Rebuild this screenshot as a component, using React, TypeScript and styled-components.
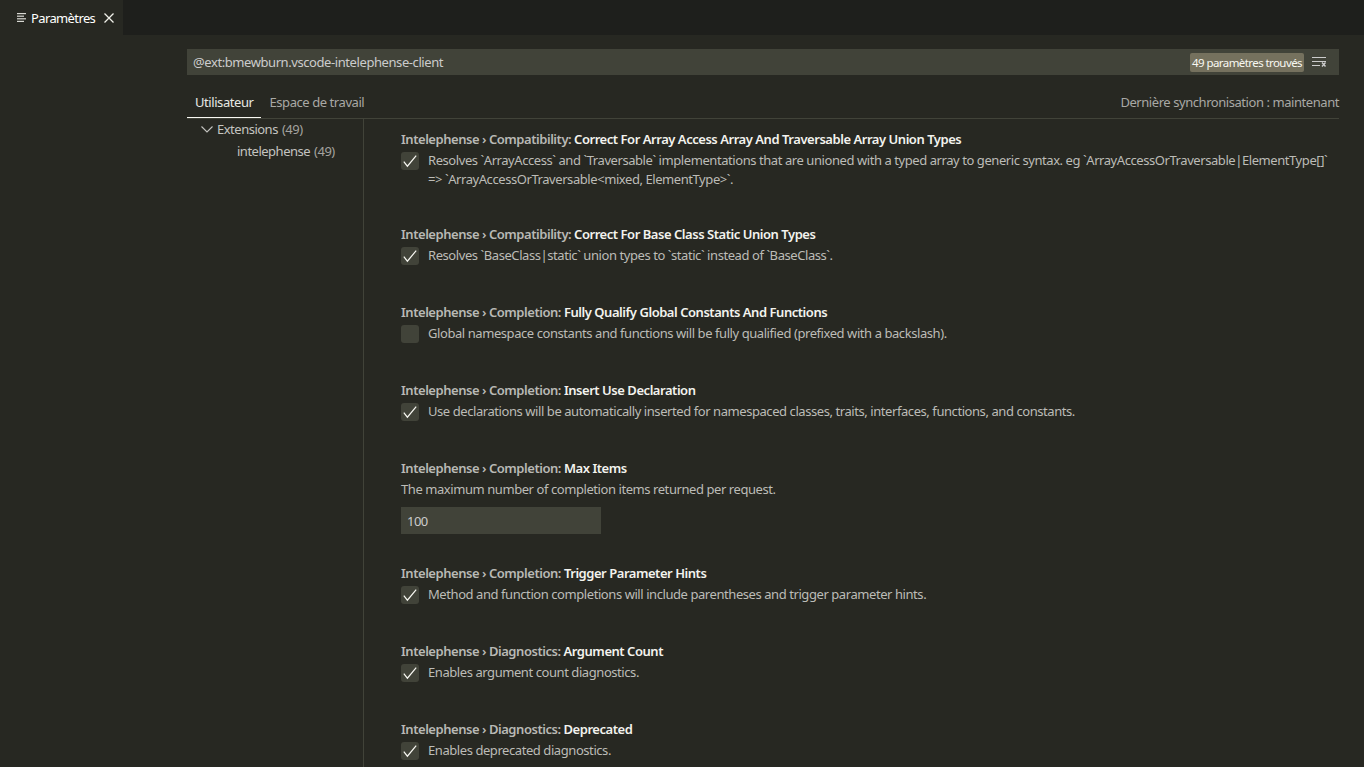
import styled, { createGlobalStyle } from "styled-components";

const GlobalStyle = createGlobalStyle`
  html, body {
    margin: 0;
    height: 100%;
    overflow: hidden;
    background: #272822;
  }
  #root {
    height: 100%;
  }
`;

const Page = styled.div`
  height: 767px;
  display: flex;
  flex-direction: column;
  background: #272822;
  color: #cccccc;
  font-family: "Noto Sans", "Open Sans", sans-serif;
  font-size: 13px;
  overflow: hidden;
`;

const TabBar = styled.div`
  height: 35px;
  flex: none;
  display: flex;
  background: #1e1f1c;
`;

const Tab = styled.div`
  width: 123px;
  display: flex;
  align-items: center;
  padding-left: 17px;
  box-sizing: border-box;
  background: #272822;
  color: #ffffff;
  font-size: 13px;
  letter-spacing: -0.62px;
`;

const TabIcon = styled.svg`
  width: 10px;
  height: 10px;
  fill: #d8d8d3;
`;

const TabLabel = styled.span`
  margin-left: 4px;
`;

const CloseButton = styled.svg`
  width: 12px;
  height: 12px;
  margin-left: 8px;
  stroke: #f0f0ea;
  stroke-width: 1.3;
  fill: none;
`;

const Editor = styled.div`
  flex: 1;
  min-height: 0;
  display: flex;
  flex-direction: column;
  padding: 14px 25px 0 187px;
`;

const SearchBox = styled.div`
  height: 26px;
  flex: none;
  display: flex;
  align-items: center;
  padding: 0 12px 0 6px;
  background: #414339;
  color: #cccccc;
`;

const SearchText = styled.span`
  flex: 1;
  letter-spacing: -0.42px;
`;

const CountBadge = styled.span`
  height: 19px;
  line-height: 19px;
  padding: 0 2px;
  background: #75715e;
  border-radius: 2px;
  color: #f8f8f2;
  font-size: 11.5px;
  letter-spacing: -0.58px;
`;

const ClearIcon = styled.svg`
  width: 16px;
  height: 16px;
  margin-left: 7px;
  stroke: #cccccc;
  fill: none;
`;

const TabsRow = styled.div`
  height: 29px;
  flex: none;
  margin-top: 14px;
  display: flex;
  align-items: flex-start;
  border-bottom: 1px solid #414339;
`;

const ScopeTab = styled.div<{ $active?: boolean }>`
  height: 29px;
  line-height: 26px;
  box-sizing: border-box;
  padding: 0 8px;
  letter-spacing: -0.43px;
  color: ${(p) => (p.$active ? "#e8e8e3" : "#a9a9a5")};
  border-bottom: 1px solid ${(p) => (p.$active ? "#f8f8f2" : "transparent")};
`;

const SyncLabel = styled.div`
  margin-left: auto;
  line-height: 26px;
  color: #a9a9a5;
  letter-spacing: -0.44px;
`;

const Body = styled.div`
  flex: 1;
  min-height: 0;
  display: flex;
`;

const Tree = styled.div`
  width: 176px;
  flex: none;
  border-right: 1px solid #414339;
`;

const TreeRow = styled.div<{ $indent: number }>`
  height: 22px;
  box-sizing: border-box;
  padding-bottom: 2px;
  display: flex;
  align-items: center;
  padding-left: ${(p) => p.$indent}px;
  letter-spacing: -0.5px;
  color: #c4c4c0;
`;

const TreeChevron = styled.svg`
  width: 16px;
  height: 16px;
  margin-right: 2px;
  stroke: #c4c4c0;
  stroke-width: 1.1;
  fill: none;
`;

const TreeCount = styled.span`
  margin-left: 4px;
  color: #a3a39f;
`;

const List = styled.div`
  flex: 1;
  min-width: 0;
  padding: 11px 0 0 37px;
`;

const Setting = styled.div<{ $height: number }>`
  height: ${(p) => p.$height}px;
  box-sizing: border-box;
`;

const Title = styled.div`
  height: 19px;
  line-height: 19px;
  font-weight: 600;
  letter-spacing: -0.46px;
  color: #b9b9b5;
  white-space: nowrap;
`;

const TitleKey = styled.span`
  color: #f3f3ee;
`;

const BoolRow = styled.div`
  margin-top: 3px;
  display: flex;
  align-items: flex-start;
`;

const CheckBox = styled.div`
  width: 18px;
  height: 18px;
  flex: none;
  margin-right: 9px;
  display: flex;
  align-items: center;
  justify-content: center;
  background: #414339;
  border-radius: 3px;
`;

const CheckMark = styled.svg`
  width: 16px;
  height: 16px;
  stroke: #f8f8f2;
  stroke-width: 1.2;
  fill: none;
`;

const Description = styled.div`
  line-height: 19px;
  margin-top: -1px;
  letter-spacing: -0.43px;
  color: #bcbcb7;
  white-space: nowrap;
`;

const PlainDescription = styled(Description)`
  margin-top: 2px;
`;

const NumberInput = styled.div`
  width: 200px;
  height: 27px;
  line-height: 29px;
  margin-top: 8px;
  padding-left: 6px;
  box-sizing: border-box;
  background: #414339;
  color: #cccccc;
  letter-spacing: -0.5px;
`;

const Check = () => (
  <CheckMark viewBox="0 0 16 16">
    <path d="M1.8 8.6 L5.4 13.2 L14.2 2.6" />
  </CheckMark>
);

type Item = {
  group: string;
  name: string;
  text: string[];
  checked?: boolean;
  height: number;
};

const items: Item[] = [
  {
    group: "Compatibility",
    name: "Correct For Array Access Array And Traversable Array Union Types",
    text: [
      "Resolves `ArrayAccess` and `Traversable` implementations that are unioned with a typed array to generic syntax. eg `ArrayAccessOrTraversable|ElementType[]`",
      "=> `ArrayAccessOrTraversable<mixed, ElementType>`.",
    ],
    checked: true,
    height: 95,
  },
  {
    group: "Compatibility",
    name: "Correct For Base Class Static Union Types",
    text: ["Resolves `BaseClass|static` union types to `static` instead of `BaseClass`."],
    checked: true,
    height: 78,
  },
  {
    group: "Completion",
    name: "Fully Qualify Global Constants And Functions",
    text: ["Global namespace constants and functions will be fully qualified (prefixed with a backslash)."],
    checked: false,
    height: 78,
  },
  {
    group: "Completion",
    name: "Insert Use Declaration",
    text: ["Use declarations will be automatically inserted for namespaced classes, traits, interfaces, functions, and constants."],
    checked: true,
    height: 78,
  },
  {
    group: "Completion",
    name: "Trigger Parameter Hints",
    text: ["Method and function completions will include parentheses and trigger parameter hints."],
    checked: true,
    height: 78,
  },
  {
    group: "Diagnostics",
    name: "Argument Count",
    text: ["Enables argument count diagnostics."],
    checked: true,
    height: 78,
  },
  {
    group: "Diagnostics",
    name: "Deprecated",
    text: ["Enables deprecated diagnostics."],
    checked: true,
    height: 78,
  },
];

function SettingRow({ item }: { item: Item }) {
  return (
    <Setting $height={item.height}>
      <Title>
        Intelephense › {item.group}: <TitleKey>{item.name}</TitleKey>
      </Title>
      <BoolRow>
        <CheckBox>{item.checked ? <Check /> : null}</CheckBox>
        <Description>
          {item.text.map((line) => (
            <div key={line}>{line}</div>
          ))}
        </Description>
      </BoolRow>
    </Setting>
  );
}

function App() {
  return (
    <Page>
      <GlobalStyle />
      <TabBar>
        <Tab>
          <TabIcon viewBox="0 0 10 10">
            <rect x="0" y="0" width="9" height="1.2" />
            <rect x="0" y="2.6" width="7" height="1.2" />
            <rect x="0" y="5.2" width="9" height="1.2" />
            <rect x="0" y="7.8" width="7" height="1.2" />
          </TabIcon>
          <TabLabel>Paramètres</TabLabel>
          <CloseButton viewBox="0 0 12 12">
            <path d="M1.5 1.5 L10.5 10.5 M10.5 1.5 L1.5 10.5" />
          </CloseButton>
        </Tab>
      </TabBar>
      <Editor>
        <SearchBox>
          <SearchText>@ext:bmewburn.vscode-intelephense-client</SearchText>
          <CountBadge>49 paramètres trouvés</CountBadge>
          <ClearIcon viewBox="0 0 16 16">
            <path d="M1 3.5 H15 M1 7.5 H15 M1 11.5 H9" />
            <path d="M11 8.5 L14.5 12.5 M14.5 8.5 L11 12.5" strokeWidth="1.4" />
          </ClearIcon>
        </SearchBox>
        <TabsRow>
          <ScopeTab $active>Utilisateur</ScopeTab>
          <ScopeTab>Espace de travail</ScopeTab>
          <SyncLabel>Dernière synchronisation : maintenant</SyncLabel>
        </TabsRow>
        <Body>
          <Tree>
            <TreeRow $indent={12}>
              <TreeChevron viewBox="0 0 16 16">
                <path d="M2.5 5.5 L8 11 L13.5 5.5" />
              </TreeChevron>
              Extensions <TreeCount>(49)</TreeCount>
            </TreeRow>
            <TreeRow $indent={50}>
              intelephense <TreeCount>(49)</TreeCount>
            </TreeRow>
          </Tree>
          <List>
            {items.slice(0, 4).map((item) => (
              <SettingRow key={item.name} item={item} />
            ))}
            <Setting $height={105}>
              <Title>
                Intelephense › Completion: <TitleKey>Max Items</TitleKey>
              </Title>
              <PlainDescription>The maximum number of completion items returned per request.</PlainDescription>
              <NumberInput>100</NumberInput>
            </Setting>
            {items.slice(4).map((item) => (
              <SettingRow key={item.name} item={item} />
            ))}
          </List>
        </Body>
      </Editor>
    </Page>
  );
}

export default App;
